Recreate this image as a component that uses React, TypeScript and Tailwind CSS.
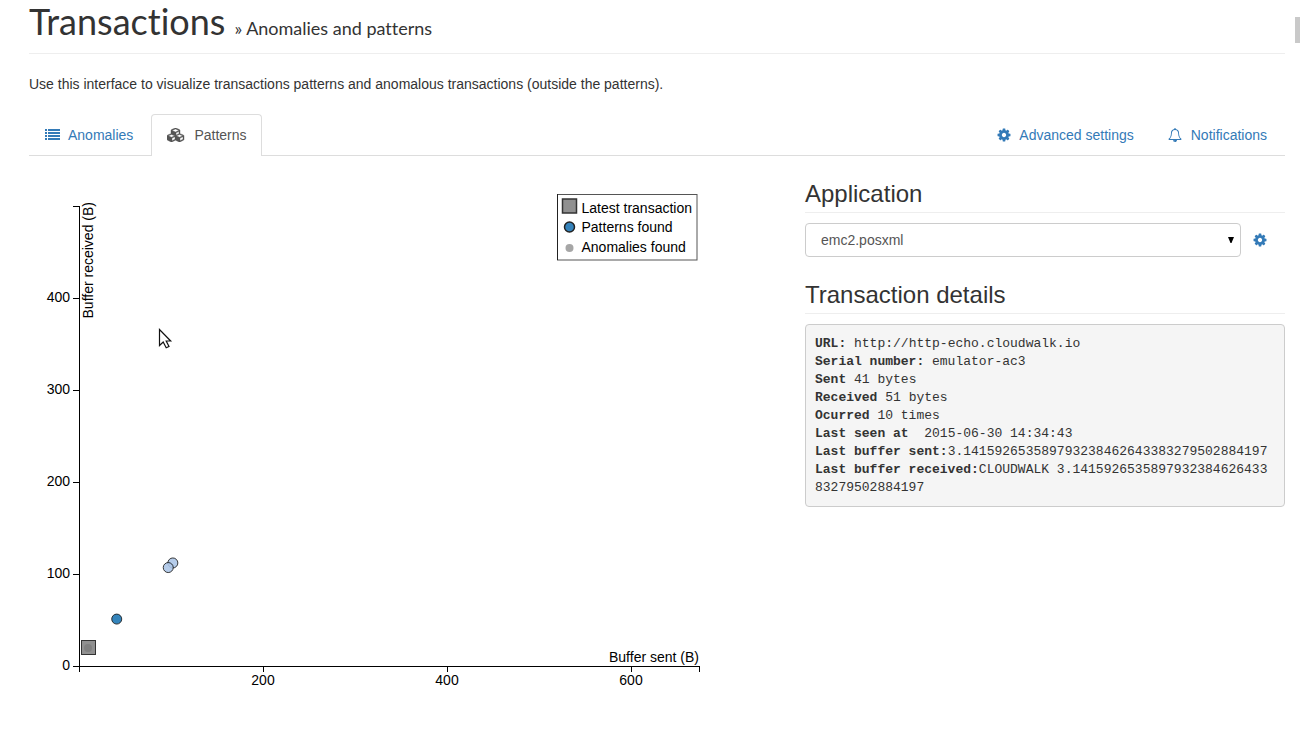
import type { ReactNode } from "react";

const SCALE = 0.92;
const PLOT_HEIGHT = 460;
const PLOT_WIDTH = 620;

const patterns = [
  { sent: 41, received: 51, fill: "#1f77b4" },
  { sent: 102, received: 112, fill: "#aec7e8" },
  { sent: 97, received: 107, fill: "#aec7e8" },
];

const details = [
  { label: "URL:", value: " http://http-echo.cloudwalk.io" },
  { label: "Serial number:", value: " emulator-ac3" },
  { label: "Sent", value: " 41 bytes" },
  { label: "Received", value: " 51 bytes" },
  { label: "Ocurred", value: " 10 times" },
  { label: "Last seen at", value: "  2015-06-30 14:34:43" },
  { label: "Last buffer sent:", value: "3.141592653589793238462643383279502884197" },
  { label: "Last buffer received:", value: "CLOUDWALK 3.141592653589793238462643383279502884197" },
];

function ListIcon() {
  return (
    <svg className="h-[14px] w-[16px]" viewBox="0 0 16 14" fill="currentColor" shapeRendering="crispEdges" aria-hidden="true">
      {[1, 4, 7, 10].map((y) => (
        <g key={y}>
          <rect x="0" y={y} width="2" height="2" />
          <rect x="3" y={y} width="12" height="2" />
        </g>
      ))}
    </svg>
  );
}

function CubesIcon() {
  return (
    <svg className="h-[14px] w-[18px]" viewBox="0 0 2304 1792" fill="currentColor" stroke="currentColor" strokeWidth="50" aria-hidden="true">
      <path d="M640 1632l384-192v-314l-384 164v342zm-64-454l404-173-404-173-404 173zm1088 454l384-192v-314l-384 164v342zm-64-454l404-173-404-173-404 173zm-448-293l384-165v-266l-384 164v267zm-64-379l441-189-441-189-441 189zm1088 518v416q0 36-19 67t-52 47l-448 224q-25 14-57 14t-57-14l-448-224q-4-2-7-4-2 2-7 4l-448 224q-25 14-57 14t-57-14l-448-224q-33-16-52-47t-19-67v-416q0-38 21.5-70t56.5-48l434-186v-400q0-38 21.5-70t56.5-48l448-192q23-10 50-10t50 10l448 192q35 16 56.5 48t21.5 70v400l434 186q36 16 57 48t21 70z" />
    </svg>
  );
}

function CogIcon() {
  return (
    <svg className="h-[14px] w-[14px]" viewBox="64 64 1664 1664" fill="currentColor" aria-hidden="true">
      <path d="M1152 896q0-106-75-181t-181-75-181 75-75 181 75 181 181 75 181-75 75-181zm512-109v222q0 12-8 23t-20 13l-185 28q-19 54-39 91 35 50 107 138 10 12 10 25t-9 23q-27 37-99 108t-94 71q-12 0-26-9l-138-108q-44 23-91 38-16 136-29 186-7 28-36 28h-222q-14 0-24.5-8.5t-11.5-21.5l-28-184q-49-16-90-37l-141 107q-10 9-25 9-14 0-25-11-126-114-165-168-7-10-7-23 0-12 8-23 15-21 51-66.5t54-70.5q-27-50-41-99l-183-27q-13-2-21-12.5t-8-23.5v-222q0-12 8-23t19-13l186-28q14-46 39-92-40-57-107-138-10-12-10-24 0-10 9-23 26-36 98.5-107.5t94.5-71.5q13 0 26 10l138 107q44-23 91-38 16-136 29-186 7-28 36-28h222q14 0 24.5 8.5t11.5 21.5l28 184q49 16 90 37l142-107q9-9 24-9 13 0 25 10 129 119 165 170 7 8 7 22 0 12-8 23-15 21-51 66.5t-54 70.5q26 50 41 98l183 28q13 2 21 12.5t8 23.5z" />
    </svg>
  );
}

function BellIcon() {
  return (
    <svg className="h-[14px] w-[14px]" viewBox="0 0 1792 1792" fill="currentColor" aria-hidden="true">
      <path d="M912 1696q0-16-16-16-59 0-101.5-42.5t-42.5-101.5q0-16-16-16t-16 16q0 73 51.5 124.5t124.5 51.5q16 0 16-16zm-666-288h1300q-266-300-266-832 0-51-24-105t-69-103-121.5-80.5-169.5-31.5-169.5 31.5-121.5 80.5-69 103-24 105q0 532-266 832zm1482 0q0 52-38 90t-90 38h-448q0 106-75 181t-181 75-181-75-75-181h-448q-52 0-90-38t-38-90q50-42 91-88t85-119.5 74.5-158.5 50-206 19.5-260q0-152 117-282.5t307-158.5q-8-19-8-39 0-40 28-68t68-28 68 28 28 68q0 20-8 39 190 28 307 158.5t117 282.5q0 139 19.5 260t50 206 74.5 158.5 85 119.5 91 88z" />
    </svg>
  );
}

function SectionTitle({ children }: { children: ReactNode }) {
  return <h2 className="mb-[10px] border-b border-[#eee] pb-1 text-2xl leading-[28px]">{children}</h2>;
}

function PatternChart() {
  return (
    <svg className="h-auto w-[700px] max-w-full text-[14px]" viewBox="0 0 700 520" role="img" aria-label="Buffer sent against buffer received">
      <g transform="translate(50,20)">
        <g fill="none" stroke="#000" shapeRendering="crispEdges">
          <path d={`M-6 0.5H0.5V${PLOT_HEIGHT + 0.5}H-6`} />
          <path d={`M0.5 ${PLOT_HEIGHT + 6}V${PLOT_HEIGHT + 0.5}H${PLOT_WIDTH + 0.5}V${PLOT_HEIGHT + 6}`} />
          {[100, 200, 300, 400].map((v) => (
            <path key={v} d={`M-6 ${PLOT_HEIGHT - v * SCALE + 0.5}H0`} />
          ))}
          {[200, 400, 600].map((v) => (
            <path key={v} d={`M${v * SCALE + 0.5} ${PLOT_HEIGHT}v6`} />
          ))}
        </g>
        {[0, 100, 200, 300, 400].map((v) => (
          <text key={v} x="-9" y={PLOT_HEIGHT - v * SCALE + 4} textAnchor="end">
            {v}
          </text>
        ))}
        {[200, 400, 600].map((v) => (
          <text key={v} x={v * SCALE} y={PLOT_HEIGHT + 19} textAnchor="middle">
            {v}
          </text>
        ))}
        <text x={PLOT_WIDTH} y={PLOT_HEIGHT - 4} textAnchor="end">
          Buffer sent (B)
        </text>
        <text transform="rotate(-90)" x="4" y="14" textAnchor="end">
          Buffer received (B)
        </text>

        {patterns.map((p) => (
          <circle
            key={p.sent}
            cx={p.sent * SCALE}
            cy={PLOT_HEIGHT - p.received * SCALE}
            r="5"
            fill={p.fill}
            stroke="#000"
            opacity="0.9"
            strokeOpacity="0.85"
          />
        ))}
        <rect x="2.5" y="434.5" width="14" height="14" fill="#909090" stroke="#333" />
        <circle cx="9" cy="442" r="4" fill="#808080" />

        <g>
          <rect x="478.5" y="-11.5" width="139.5" height="65.5" fill="#fff" stroke="#555" />
          <path d="M478.5 -12V54" stroke="#222" />
          <rect x="483.5" y="-7" width="14" height="14" fill="#909090" stroke="#333" strokeWidth="1.5" />
          <circle cx="490.5" cy="21" r="5" fill="#3583bb" stroke="#222" strokeWidth="1.5" />
          <circle cx="490.5" cy="42" r="4" fill="#a6a6a6" />
          <text x="502.5" y="7">Latest transaction</text>
          <text x="502.5" y="26">Patterns found</text>
          <text x="502.5" y="46">Anomalies found</text>
        </g>
      </g>
      <path
        d="M130.5 143.5v16l3.7-3.5 3 5.8 2.8-1.3-2.8-5.5h4.5z"
        fill="#fff"
        stroke="#111"
        strokeWidth="1.2"
      />
    </svg>
  );
}

export default function App() {
  return (
    <div className="relative bg-white pr-[15px] pl-[29px] font-['Liberation_Sans',Arial,sans-serif] text-[14px] leading-5 text-[#333]">
      <div className="absolute top-[17px] right-0 h-[26px] w-[5px] bg-[#c9c9c9]" />

      <h1 className="flex items-baseline gap-[9px] border-b border-[#eee] pt-px pb-3 font-['Lato',sans-serif] text-4xl leading-10 [font-variant-ligatures:none]">
        Transactions
        <small className="text-lg leading-5">» Anomalies and patterns</small>
      </h1>

      <p className="mt-5">
        Use this interface to visualize transactions patterns and anomalous transactions (outside the patterns).
      </p>

      <nav className="mt-5 flex border-b border-[#ddd] text-[#337ab7]">
        <a href="#anomalies" className="flex items-center gap-[7px] px-4 pt-[11px] pb-[10px]">
          <ListIcon />
          Anomalies
        </a>
        <a
          href="#patterns"
          className="-mb-px ml-[2px] flex items-center gap-[9px] rounded-t border border-b-0 border-[#ddd] bg-white pt-[10px] pr-[14px] pb-[11px] pl-[15px] text-[#555]"
        >
          <CubesIcon />
          Patterns
        </a>
        <a href="#settings" className="ml-auto flex items-center gap-2 px-4 pt-[11px] pb-[10px]">
          <CogIcon />
          Advanced settings
        </a>
        <a href="#notifications" className="ml-[2px] flex items-center gap-[9px] pt-[11px] pr-[18px] pb-[10px] pl-4">
          <BellIcon />
          Notifications
        </a>
      </nav>

      <main className="grid grid-cols-[97fr_60fr]">
        <section className="min-w-0 pt-[30px]">
          <PatternChart />
        </section>

        <section className="min-w-0 pt-6">
          <SectionTitle>
            <label htmlFor="application">Application</label>
          </SectionTitle>
          <div className="flex items-center gap-3">
            <div className="relative flex-1">
              <select
                id="application"
                className="block h-[34px] w-full appearance-none rounded border border-[#ccc] bg-white px-[15px] text-[14px] text-[#555]"
              >
                <option>emc2.posxml</option>
              </select>
              <svg className="pointer-events-none absolute top-[14px] right-[7px] h-[6px] w-[6px]" viewBox="0 0 6 6" aria-hidden="true">
                <path d="M0 0h6L3.5 6h-1z" />
              </svg>
            </div>
            <a href="#application-settings" aria-label="Application settings" className="mr-[18px] text-[#337ab7]">
              <CogIcon />
            </a>
          </div>

          <div className="mt-6">
            <SectionTitle>Transaction details</SectionTitle>
          </div>
          <pre className="rounded border border-[#ccc] bg-[#f5f5f5] px-[9px] pt-[10px] pb-[9px] font-['Liberation_Mono','Courier_New',monospace] text-[13px] leading-[18px] break-all whitespace-pre-wrap">
            {details.map((d) => (
              <div key={d.label}>
                <b>{d.label}</b>
                {d.value}
              </div>
            ))}
          </pre>
        </section>
      </main>
    </div>
  );
}
